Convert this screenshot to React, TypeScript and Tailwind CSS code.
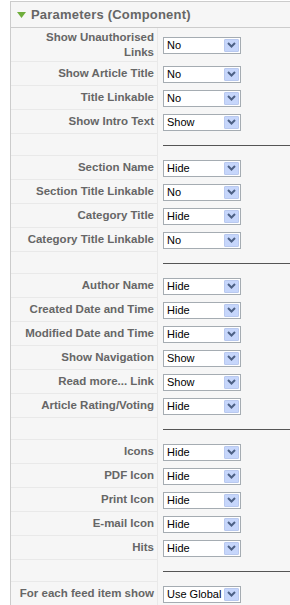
import React from "react";

type Row = { label: string; value?: string; spacer?: boolean; tall?: boolean };

const rows: Row[] = [
  { label: "Show Unauthorised Links", value: "No", tall: true },
  { label: "Show Article Title", value: "No" },
  { label: "Title Linkable", value: "No" },
  { label: "Show Intro Text", value: "Show" },
  { label: "", spacer: true },
  { label: "Section Name", value: "Hide" },
  { label: "Section Title Linkable", value: "No" },
  { label: "Category Title", value: "Hide" },
  { label: "Category Title Linkable", value: "No" },
  { label: "", spacer: true },
  { label: "Author Name", value: "Hide" },
  { label: "Created Date and Time", value: "Hide" },
  { label: "Modified Date and Time", value: "Hide" },
  { label: "Show Navigation", value: "Show" },
  { label: "Read more... Link", value: "Show" },
  { label: "Article Rating/Voting", value: "Hide" },
  { label: "", spacer: true },
  { label: "Icons", value: "Hide" },
  { label: "PDF Icon", value: "Hide" },
  { label: "Print Icon", value: "Hide" },
  { label: "E-mail Icon", value: "Hide" },
  { label: "Hits", value: "Hide" },
  { label: "", spacer: true },
  { label: "For each feed item show", value: "Use Global" },
];

function Select({ value }: { value: string }) {
  return (
    <div className="flex h-[17px] w-[78px] items-center border border-[#a5acb2] bg-white">
      <span className="flex-1 pl-[3px] text-[11px] leading-none text-black">{value}</span>
      <span className="m-[1px] flex h-[13px] w-[15px] items-center justify-center rounded-[1px] border border-[#b9c9ef] bg-[#c6d6fb]">
        <svg width="9" height="6" viewBox="0 0 9 6">
          <path d="M1 1 L4.5 4.5 L8 1" fill="none" stroke="#4d6185" strokeWidth="2" />
        </svg>
      </span>
    </div>
  );
}

export default function App() {
  return (
    <div className="min-h-[605px] bg-white pl-[10px] pt-[1px] font-['Liberation_Sans',Arial,sans-serif]">
      <div className="border-l border-t border-[#cccccc] bg-[#f6f6f6]">
        <div className="flex h-[26px] items-center gap-[5px] border-b border-[#cccccc] pl-[6px]">
          <svg width="9" height="6" viewBox="0 0 9 6">
            <path d="M0 0 H9 L4.5 6 Z" fill="#6fae3c" />
          </svg>
          <span className="text-[13px] font-bold tracking-[0.2px] text-[#666666]">Parameters (Component)</span>
        </div>
        <div className="flex flex-col">
          {rows.map((r, i) => (
            <div key={i} className={`flex ${r.spacer ? "h-[22px]" : r.tall ? "h-[34px]" : "h-[24px]"}`}>
              <div className="flex w-[147px] items-center justify-end border-b border-r border-[#e9e9e9] pr-[3px] text-right text-[11.5px] font-bold leading-[15px] text-[#666666]">
                {r.tall ? (
                  <span>
                    Show Unauthorised
                    <br />
                    Links
                  </span>
                ) : (
                  r.label
                )}
              </div>
              <div className="flex flex-1 items-center pl-[5px]">
                {r.spacer ? (
                  <div className="h-[1px] w-full bg-[#555555]" />
                ) : (
                  <Select value={r.value ?? ""} />
                )}
              </div>
            </div>
          ))}
        </div>
      </div>
    </div>
  );
}
